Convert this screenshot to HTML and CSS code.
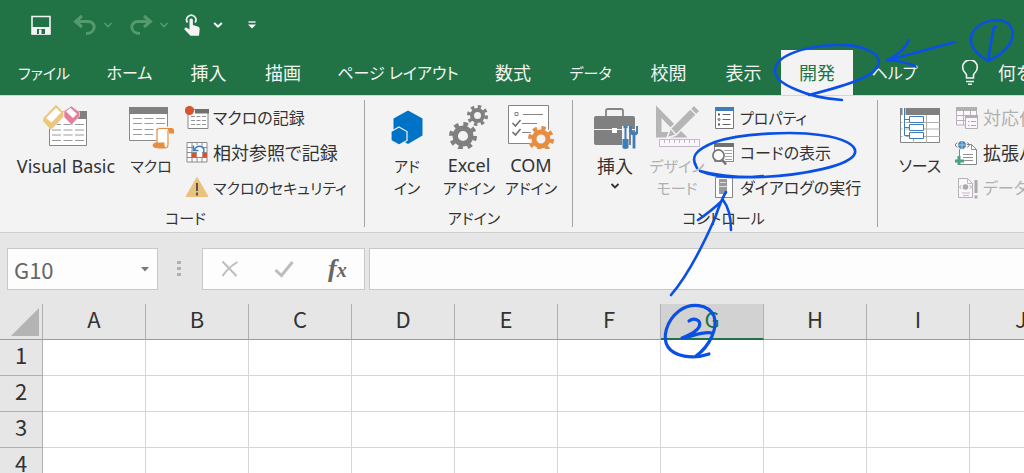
FILE: index.html
```html
<!DOCTYPE html>
<html lang="ja">
<head>
<meta charset="utf-8">
<title>Excel - 開発</title>
<link rel="stylesheet" href="styles.css">
</head>
<body>
<div class="app">
<header class="titlebar">
  <div class="quick">
    <button class="qbtn save" aria-label="上書き保存"><svg width="20" height="20" viewBox="31 14 20 20"><path d="M32 15.500h18v17.500H32z" fill="none" stroke="#f3f3f3" stroke-width="1.600"/><path d="M32 26h18v7.500H32z" fill="#f3f3f3"/><path d="M37 28h8v5h-8z" fill="#217346"/><path d="M39 28.500h2.500v4.500H39z" fill="#f3f3f3"/></svg></button>
    <button class="qbtn undo" aria-label="元に戻す"><svg width="24" height="22" viewBox="72 14 24 22"><path d="M81 16l-6.500 5.500 6.500 5.500M75 21.500h12c8.500 0 8.500 12 -2 12" fill="none" stroke="#55996f" stroke-width="3"/></svg></button>
    <button class="qbtn undo-menu" aria-label="元に戻すの一覧"><svg width="10" height="8" viewBox="0 0 10 8"><path d="M1.500 2l3.500 3.500L8.500 2" fill="none" stroke="#55996f" stroke-width="1.600"/></svg></button>
    <button class="qbtn redo" aria-label="やり直し"><svg width="24" height="22" viewBox="128 14 24 22"><path d="M143 16l6.500 5.500-6.500 5.500M149 21.500h-12c-8.500 0-8.500 12 2 12" fill="none" stroke="#55996f" stroke-width="3"/></svg></button>
    <button class="qbtn redo-menu" aria-label="やり直しの一覧"><svg width="10" height="8" viewBox="0 0 10 8"><path d="M1.500 2l3.500 3.500L8.500 2" fill="none" stroke="#55996f" stroke-width="1.600"/></svg></button>
    <button class="qbtn touch" aria-label="タッチ/マウス モードの切り替え"><svg width="18" height="24" viewBox="182 12 18 24"><path d="M186.500 21.500a4.600 4.600 0 1 1 7.500 0" fill="none" stroke="#f3f3f3" stroke-width="1.700"/><path d="M188.500 18.500q1.800-2 3.400 0V24l5.500 1.800q1.600.7 1.300 2.300l-.7 6.600h-8.500l-6.200-6.500q.3-2.200 2.300-1.500l2.900 1.800z" fill="#f3f3f3"/></svg></button>
    <button class="qbtn touch-menu" aria-label="モードの一覧"><svg width="10" height="8" viewBox="0 0 10 8"><path d="M1.200 2l3.800 3.700L8.800 2" fill="none" stroke="#fff" stroke-width="2"/></svg></button>
    <button class="qbtn" aria-label="クイック アクセス ツール バーのカスタマイズ"><svg width="10" height="10" viewBox="0 0 10 10"><path d="M1.500 2h7" stroke="#fff" stroke-width="1.300"/><path d="M1 4.500h8L5 8.500z" fill="#fff"/></svg></button>
  </div>
  <nav class="tabs">
    <button class="tab kana">ファイル</button>
    <button class="tab">ホーム</button>
    <button class="tab kanji">挿入</button>
    <button class="tab kanji">描画</button>
    <button class="tab">ページ レイアウト</button>
    <button class="tab kanji">数式</button>
    <button class="tab kana">データ</button>
    <button class="tab kanji">校閲</button>
    <button class="tab kanji">表示</button>
    <button class="tab kanji active" aria-current="page">開発</button>
    <button class="tab">ヘルプ</button>
    <button class="tab kanji tell"><svg width="20" height="26" viewBox="960 59 20 26"><path d="M966.500 77v-2.500q0-1.500-2-3.500a7.300 7.300 0 1 1 11 0q-2 2-2 3.500V77zM966 80.500h8M968 83.300h4" fill="none" stroke="#f3f3f3" stroke-width="1.600"/></svg>何をしますか</button>
  </nav>
</header>

<main class="ribbon">
  <section class="group g-code">
    <div class="items">
      <button class="big vb"><svg class="icon" viewBox="42 102 46 46"><path d="M48.500 110.500h37v34h-37z" fill="#fff" stroke="#858585"/><path d="M76 110h10v8H76z" fill="#808080"/><path d="M51 123.500h32M51 129h32M51 134h32M51 139.500h32" stroke="#9b9b9b" stroke-dasharray="9 2.500"/><path d="M42 117v3.500l8 8.500 12.500-13v-5L55 103.500z" fill="#edc67c" stroke="#f3f3f3" stroke-width=".6"/><path d="M45 117l10-10 5 4.500-9.500 10z" fill="#fff"/><path d="M63 110v6l7.500 8 8-8.500v-4.500L70.500 105z" fill="#e3809b" stroke="#f3f3f3" stroke-width=".6"/><path d="M65 110.500l4.500-3.500 6.500 6-4 4z" fill="#fff"/></svg><span>Visual Basic</span></button>
      <button class="big macro"><svg class="icon" viewBox="128 102 46 46"><path d="M129.500 107h38v32.500h-38z" fill="#fff" stroke="#8b8b8b"/><path d="M129 106h39v7h-39z" fill="#808080"/><path d="M133 117.500h32M133 122.500h32M133 128.500h32M133 133.500h20" stroke="#9b9b9b" stroke-dasharray="9 2.500"/><path d="M158 127h14.500l-2 17q-.5 3-4 3h-9q-3-6 .5-6z" fill="#fff" stroke="#f3f3f3" stroke-width="3"/><path d="M157 142v-12q0-2.500 3-2.500h10.500q-2.500 0-2.500 3v13q0 3.500-3.500 3.500h-7" fill="#fff" stroke="#e78d42" stroke-width="1.200"/><path d="M169 127h3q2.500 0 2.500 5.500H169zM155 141.500h9.500q-.5 5.500 2.500 5.500h-12q-5-2.500 0-5.500z" fill="#e78d42"/></svg><span class="kana">マクロ</span></button>
      <div class="smalls">
        <button class="small"><svg class="sicon" viewBox="186 104 24 24"><path d="M189 107.500h20v19h-20z" fill="#fff" stroke="#858585"/><path d="M196 107h14v4.500h-14z" fill="#707070"/><path d="M192 114.500h15M192 118.500h15M192 122.500h15" stroke="#929292" stroke-dasharray="4 1.500"/><circle cx="190.500" cy="108.500" r="4.600" fill="#d75331"/></svg>マクロの記録</button>
        <button class="small kanji"><svg class="sicon" viewBox="186 139 24 24"><path d="M188 140.500h20v19.500h-20zM193 140v20M198 140v20M203 140v20M188 145.500h20M188 150.500h20M188 155.500h20" fill="#fff" stroke="#8b8b8b"/><path d="M192.500 151h5v4.500h-5zM203.500 151h4.500v4.500h-4.500z" fill="#d75331"/><path d="M195 143v7h3v5h5v-5h2v-3l-3-4z" fill="#fff"/><path d="M194.500 143.500v5h5M195 148q3-5 7-3.500t2.500 6" fill="none" stroke="#3f7dba" stroke-width="1.500"/></svg>相対参照で記録</button>
        <button class="small kana"><svg class="sicon" viewBox="186 174 24 24"><path d="M198 175.500l11 19h-22z" fill="#ebc17c" stroke="#ebc17c" stroke-linejoin="round"/><path d="M198 181v8M198 190.500v3" stroke="#555" stroke-width="2"/></svg>マクロのセキュリティ</button>
      </div>
    </div>
    <h2 class="title">コード</h2>
  </section>

  <section class="group g-addin">
    <div class="items">
      <button class="big kana"><svg class="icon" viewBox="384 102 46 46"><path d="M408 109.500l14.500 8v17L408 143l-14.500-8.500v-17z" fill="#0173c7"/><path d="M399 126l8 4.500v9l-8 4.500-8-4.500v-9z" fill="#0173c7" stroke="#f3f3f3" stroke-width="1.200"/></svg><span>アド<br>イン</span></button>
      <button class="big kana"><svg class="icon" viewBox="446 102 46 46"><g fill="none" stroke="#808080"><circle cx="463" cy="135" r="7.800" stroke-width="5.500"/><circle cx="463" cy="135" r="12" stroke-width="4" stroke-dasharray="4.700 4.720"/><circle cx="477.500" cy="114.500" r="5.500" stroke-width="4"/><circle cx="477.500" cy="114.500" r="8.800" stroke-width="3.500" stroke-dasharray="3.400 3.510"/></g></svg><span><span class="latin">Excel</span><br>アドイン</span></button>
      <button class="big kana"><svg class="icon" viewBox="508 102 46 46"><path d="M508.500 104.500h40v38h-40z" fill="#fff" stroke="#858585"/><path d="M515 111.500h3v3h-3zM523 113.500h20M522 122.500h15M522 131.500h9" fill="none" stroke="#858585"/><path d="M512.500 122l3 3 5-6M512.500 131l3 3 5-6" fill="none" stroke="#707070" stroke-width="1.600"/><circle cx="541" cy="138" r="12" fill="#f3f3f3"/><g fill="none" stroke="#e78d42"><circle cx="541" cy="138" r="7" stroke-width="5"/><circle cx="541" cy="138" r="11" stroke-width="4" stroke-dasharray="4.300 4.340"/></g></svg><span><span class="latin">COM</span><br>アドイン</span></button>
    </div>
    <h2 class="title">アドイン</h2>
  </section>

  <section class="group g-control">
    <div class="items">
      <button class="big kanji"><svg class="icon" viewBox="593 104 46 46"><path d="M607 117v-5q0-2 2-2h13q2 0 2 2v5" fill="none" stroke="#858585" stroke-width="1.800"/><path d="M597 117h37q2 0 2 2v25q0 2-2 2h-37q-2 0-2-2v-25q0-2 2-2z" fill="#808080"/><path d="M595 130.500h41" stroke="#f3f3f3"/><path d="M613 129h5v5h-5z" fill="#fff"/><path d="M623 127h7v24h-7zM632 135h6v15h-6z" fill="#f3f3f3"/><path d="M626.500 127.500v13M624.500 128h4" stroke="#3f7dba" stroke-width="2"/><path d="M623.500 140h6v9q-3 2-6 0z" fill="#3f7dba"/><path d="M631.500 127v4q0 4 3.500 4t3.500-4v-4M635 135v14.500" fill="none" stroke="#3f7dba" stroke-width="2.800"/></svg><span>挿入</span><svg class="down" width="10" height="10" viewBox="0 0 10 10"><path d="M1.500 3L5 6.500 8.500 3" fill="none" stroke="#333" stroke-width="1.800"/></svg></button>
      <button class="big kana" disabled><svg class="icon" viewBox="654 104 46 46"><path d="M656 106.500l31.500 32H656zM661.500 119v14h13.500z" fill="#b5b5b5" fill-rule="evenodd"/><path d="M667 139l3-9 24-24 6 6-24 24z" fill="#b5b5b5" stroke="#f3f3f3" stroke-width="1.500"/><path d="M671 130l5 5.500M690 109.500l6 6" stroke="#f3f3f3" stroke-width="1.300"/><path d="M659.500 140.500h40v7h-40z" fill="#fbf6fb" stroke="#c5b8c5"/><path d="M664.500 141v3M669.500 141v3M674.500 141v3M679.500 141v3M684.500 141v3M689.500 141v3M694.500 141v3" stroke="#c5b8c5"/></svg><span>デザイン<br>モード</span></button>
      <div class="smalls">
        <button class="small kana"><svg class="sicon" viewBox="713 104 24 24"><path d="M716.500 106h18v20.500h-18z" fill="#fff" stroke="#777"/><path d="M716 105h19v4h-19z" fill="#3f7dba"/><path d="M723.500 112.500h8M723.500 117.500h8M723.500 122.500h8" stroke="#666"/><path d="M719 112.500h2M719 122.500h2" stroke="#555" stroke-width="2"/><circle cx="720" cy="117.500" r="1" fill="none" stroke="#555"/></svg>プロパティ</button>
        <button class="small"><svg class="sicon" viewBox="713 139 24 24"><path d="M715.500 141.500h19v18h-19z" fill="#fff" stroke="#858585"/><path d="M715 141h20v4h-20z" fill="#707070"/><path d="M725 148.500h8M726 151.500h7M726 154.500h7M726 157.500h7" stroke="#a5a5a5"/><circle cx="719.500" cy="153.500" r="5.600" fill="#fbfbfb" stroke="#777" stroke-width="1.700"/><path d="M723 157.500l4 5" stroke="#777" stroke-width="2.600"/></svg>コードの表示</button>
        <button class="small"><svg class="sicon" viewBox="713 174 24 24"><path d="M716.500 175.500h17v20h-17z" fill="#fff" stroke="#858585"/><path d="M720 177h8v15h-8z" fill="#999"/><path d="M720 184.500h8M721 180.500h6" stroke="#ddd"/></svg>ダイアログの実行</button>
      </div>
    </div>
    <h2 class="title">コントロール</h2>
  </section>

  <section class="group g-xml">
    <div class="items">
      <button class="big"><svg class="icon" viewBox="898 104 46 46"><path d="M901.500 110.500h39v33h-39z" fill="#fff" stroke="#858585"/><path d="M901 109h40v7h-40z" fill="#808080"/><path d="M927.500 116v28M902 123.500h39M902 130h39M902 137.500h39M914.500 139v5" stroke="#b0b0b0"/><path d="M903.500 109h3v30h-3z" fill="#fff"/><path d="M910.500 117.500h14v6h-14zM910.500 125.500h14v6h-14zM910.500 133.500h14v6h-14z" fill="#fff" stroke="#3f7dba"/><path d="M905.500 109v27.500h5M905.500 120.500h5M905.500 128.500h5" fill="none" stroke="#3f7dba"/></svg><span>ソース</span></button>
      <div class="smalls">
        <button class="small kanji" disabled><svg class="sicon" viewBox="956 104 24 24"><path d="M957.500 106h20v17h-20zM964.500 108v15M971.500 108v15M957 113.500h20M957 118.500h20" fill="#fbf6fb" stroke="#b8b0b8"/><path d="M957 105h21v4h-21z" fill="#b0b0b0"/><path d="M966.500 113.500h12v13h-12z" fill="#fbf6fb" stroke="#b0b0b0"/><path d="M966 113h13v3h-13z" fill="#b0b0b0"/><path d="M969 119.500h1.500M972 119.500h5M969 123.500h1.500M972 123.500h5" stroke="#aaa"/></svg>対応付けのプロパティ</button>
        <button class="small kanji"><svg class="sicon" viewBox="956 136 24 24"><path d="M960.500 139.500h12l5 5v15h-17z" fill="#fff" stroke="#858585"/><path d="M972.500 139.500v5h5M964 149.500h10M964 152.500h10M965 155.500h9" fill="none" stroke="#909090"/><circle cx="963" cy="140" r="4.500" fill="#4a87bd" stroke="#f3f3f3"/><path d="M959 140h8M963 136v8" stroke="#c8dced" stroke-width=".7"/><path d="M958 137.500l-2 2.500 2 2.500M968.500 137.500l2 2.500-2 2.500" fill="none" stroke="#777"/><path d="M960 151v9M956 156h9" stroke="#4da181" stroke-width="3"/></svg>拡張パック</button>
        <button class="small" disabled><svg class="sicon" viewBox="956 171 24 24"><path d="M959.500 173.500h9l5 5v14h-14z" fill="#fbf6fb" stroke="#b8b0b8"/><path d="M968.500 173.500v5h5M963 188h8M964 190.500h6" fill="none" stroke="#c5b8c5"/><circle cx="966.500" cy="182" r="2.800" fill="#aaa"/><path d="M962.500 180l-2 2 2 2M970.500 180l2 2-2 2" fill="none" stroke="#aaa"/><path d="M977 175v13M977 190.500v3" stroke="#aaa" stroke-width="3"/></svg>データの更新</button>
      </div>
    </div>
  </section>
</main>

<div class="formula">
  <div class="namebox"><input class="name" aria-label="名前ボックス" value="G10"><button class="drop" aria-label="名前の一覧"><svg width="8" height="5" viewBox="0 0 8 5"><path d="M0 0h8L4 4.500z" fill="#777"/></svg></button></div>
  <svg class="grip" width="4" height="18" viewBox="0 0 4 18"><path d="M0 1h4v3H0zM0 7h4v3H0zM0 13h4v3H0z" fill="#b0b0b0"/></svg>
  <div class="fxbox">
    <button aria-label="キャンセル"><svg width="20" height="20" viewBox="0 0 20 20"><path d="M2.500 2.500l14 14.500M17.500 3Q8 8.500 2.500 17" fill="none" stroke="#bdbdbd" stroke-width="2"/></svg></button>
    <button aria-label="入力"><svg width="20" height="20" viewBox="0 0 20 20"><path d="M1.500 11l6 5.500L18.500 3" fill="none" stroke="#bdbdbd" stroke-width="3"/></svg></button>
    <button class="fx" aria-label="関数の挿入">f<span class="x">x</span></button>
  </div>
  <input class="entry" aria-label="数式バー">
</div>

<div class="sheet">
<table class="grid">
  <colgroup><col class="rowcol"><col span="10"></colgroup>
  <thead><tr><th class="corner"><svg width="28" height="28" viewBox="0 0 28 28"><path d="M28 0v28H0z" fill="#b4b4b4"/></svg></th><th>A</th><th>B</th><th>C</th><th>D</th><th>E</th><th>F</th><th class="sel">G</th><th>H</th><th>I</th><th>J</th></tr></thead>
  <tbody>
    <tr><th>1</th><td></td><td></td><td></td><td></td><td></td><td></td><td></td><td></td><td></td><td></td></tr>
    <tr><th>2</th><td></td><td></td><td></td><td></td><td></td><td></td><td></td><td></td><td></td><td></td></tr>
    <tr><th>3</th><td></td><td></td><td></td><td></td><td></td><td></td><td></td><td></td><td></td><td></td></tr>
    <tr><th>4</th><td></td><td></td><td></td><td></td><td></td><td></td><td></td><td></td><td></td><td></td></tr>
  </tbody>
</table>
</div>

<svg class="ink" width="1024" height="473" viewBox="0 0 1024 473" aria-hidden="true">
  <g fill="none" stroke="#0a50e6" stroke-width="2.600" stroke-linecap="round" stroke-linejoin="round">
    <path d="M842 100Q815 98 797 90C780 83 774 77 775 69C777 55 806 46 835 45C862 44 880 53 879 63C876 76 852 84 809 95"/>
    <path d="M955 42L887 60.500M909 40Q904 52 887 60.500Q900 60 915 66"/>
    <path d="M988 61C978 55 970 47 971 38C973 26 986 20 998 20C1009 21 1015 29 1012 39C1009 48 1001 55 988 61L993 31Q994 26 996 27"/>
    <path d="M697 168C690 157 695 150 715 142C742 133 795 131 820 135C843 138 857 145 855 153C851 166 802 175 763 177Q725 178 700 171Q722 180 763 176"/>
    <path d="M671 295C690 273 704 243 715 218Q721 200 726 192M698 220Q710 212 723 200Q731 210 731 230"/>
    <path stroke-width="3.200" d="M696 356C710 346 718 328 714 316C708 304 691 302 679 311C666 321 662 338 668 347C674 356 692 360 709 354"/>
    <path stroke-width="3.200" d="M689 321C694 317 702 320 699 327C696 333 686 336 682 338C692 337 701 331 712 333"/>
  </g>
</svg>
</div>
</body>
</html>
```

FILE: styles.css
```css
* { box-sizing: border-box; }
body {
  margin: 0;
  background: #fff;
  color: #333;
  font-family: "Noto Sans", "Noto Sans CJK JP", sans-serif;
  font-size: 16px;
  font-feature-settings: "palt";
}
button, input {
  font: inherit;
  font-feature-settings: inherit;
  color: inherit;
  border: 0;
  padding: 0;
  margin: 0;
  background: none;
}
svg { display: block; flex: none; }
.app { position: relative; height: 100vh; overflow: hidden; }
.kana { font-size: 15px; }
.kanji, .latin { font-size: 18px; }

.titlebar { background: #217346; color: #f3f3f3; }
.quick { display: flex; align-items: center; height: 50px; padding-left: 31px; }
.save { margin-right: 22px; }
.undo, .redo { margin-right: 6px; }
.undo-menu { margin-right: 16px; }
.redo-menu { margin-right: 14px; }
.touch { margin-right: 12px; }
.touch-menu { margin-right: 24px; }
.tabs {
  display: grid;
  grid-template-columns: 88px 83px 75px 74px 156px 74px 81px 75px 75px 72px 83px 1fr;
  height: 45px;
}
.tab { white-space: nowrap; line-height: 44px; }
.active { background: #f3f3f3; color: #217346; }
.tell { display: flex; align-items: center; gap: 18px; padding-left: 24px; overflow: hidden; min-width: 0; }

.ribbon {
  display: flex;
  background: #f3f3f3;
  border-bottom: 1px solid #cfcfcf;
  border-top: 1px solid #c8dcd0;
  padding: 4px 0 5px;
  overflow: hidden;
}
.group {
  display: flex;
  flex-direction: column;
  flex: none;
  border-right: 1px solid #a5a5a5;
}
.items { display: flex; height: 105px; }
.title { margin: 0; padding-top: 5px; font-size: 15px; font-weight: 400; line-height: 17px; text-align: center; }
.g-code { width: 365px; padding-left: 7px; }
.g-addin { width: 208px; padding-left: 11px; }
.g-control { width: 305px; padding-left: 11px; }
.g-xml { padding-left: 11px; border-right: 0; }
.big {
  display: flex;
  flex-direction: column;
  align-items: center;
  width: 62px;
  padding-top: 3px;
  line-height: 22px;
  white-space: nowrap;
}
.vb { width: 118px; font-size: 18px; }
.macro { width: 52px; }
.latin { line-height: 20px; }
.icon { width: 46px; height: 46px; margin-bottom: 6px; }
.down { margin-top: 4px; }
.smalls { display: flex; flex-direction: column; padding-left: 8px; }
.g-control .smalls, .g-xml .smalls { padding-left: 4px; }
.small { display: flex; align-items: center; gap: 4px; flex: none; height: 35px; line-height: 32px; white-space: nowrap; }
.sicon { width: 24px; height: 24px; }
button:disabled { color: #b0b0b0; }
.g-control .title { padding-right: 14px; }

.formula {
  display: flex;
  align-items: center;
  background: #e6e6e6;
  padding: 15px 0 14px 7px;
}
.namebox, .fxbox, .entry { height: 42px; background: #fdfdfd; border: 1px solid #c8c8c8; }
.namebox { display: flex; width: 151px; align-items: center; padding: 0 8px 0 6px; }
.name { flex: 1; min-width: 0; height: 36px; font-family: "Noto Sans CJK JP", sans-serif; font-size: 22px; color: #666; }
.grip { margin: 0 21px 0 19px; }
.fxbox { display: flex; width: 163px; align-items: center; gap: 34px; padding-left: 17px; }
.fx { font-family: "Liberation Serif", serif; font-size: 26px; font-style: italic; font-weight: 700; line-height: 30px; color: #666; }
.x { font-size: 20px; }
.entry { flex: 1; min-width: 0; margin-left: 4px; border-right: 0; }

.sheet { overflow: hidden; }
.grid {
  table-layout: fixed;
  border-collapse: separate;
  border-spacing: 0;
  width: 1073px;
  font-family: "Noto Sans CJK JP", sans-serif;
  font-size: 22px;
}
.grid col { width: 103px; }
.grid .rowcol { width: 43px; }
.grid th, .grid td { height: 36px; padding: 0; border-right: 1px solid #d6d6d6; border-bottom: 1px solid #d6d6d6; }
.grid th { padding-bottom: 6px; background: #e6e6e6; font-weight: 400; line-height: 29px; color: #333; border-color: #b0b0b0; }
.grid thead th { border-bottom-color: #9b9b9b; }
.grid thead .sel { background: #d2d2d2; color: #217346; border-bottom: 2px solid #217346; line-height: 28px; }
.grid thead .corner { padding: 0 0 0 11px; }

.ink { position: absolute; top: 0; left: 0; pointer-events: none; }
```
